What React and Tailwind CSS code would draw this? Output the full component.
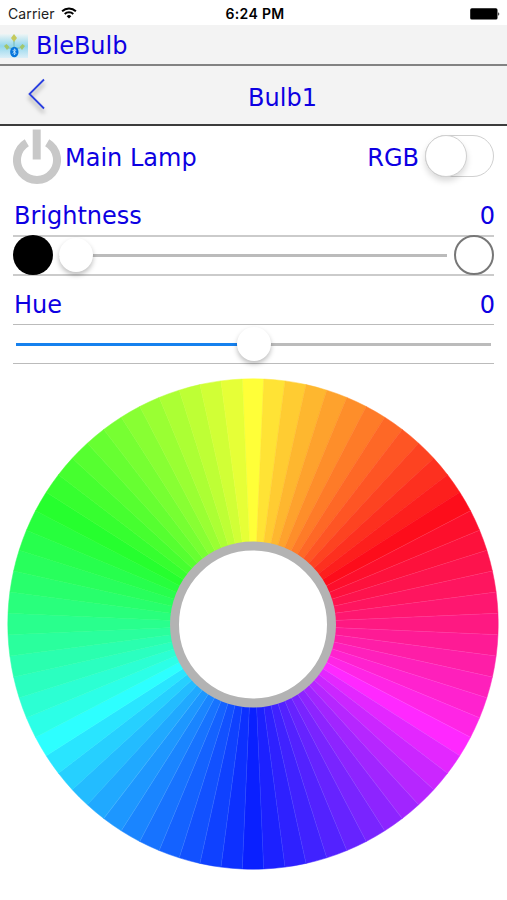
import React from 'react'

const stops = [
  [255, 255, 56],
  [253, 13, 27],
  [255, 40, 255],
  [10, 32, 255],
  [45, 255, 255],
  [38, 255, 46],
]

const wedges = Array.from({ length: 72 }, (_, i) => {
  const part = Math.floor(i / 12)
  const from = stops[part]
  const to = stops[(part + 1) % 6]
  const step = (i % 12) / 12
  // red, green and blue take up a little more of the wheel than the mixes
  const t = part % 2 === 0 ? step ** 0.87 : 1 - (1 - step) ** 0.87
  const rgb = from.map((c, n) => Math.round(c + (to[n] - c) * t))
  return { angle: i * 5, fill: `rgb(${rgb.join(',')})` }
})

// thin highlights are only visible on the darker half of the wheel
const seams = wedges.filter((w) => w.angle >= 60 && w.angle <= 215)

const point = (deg, r) => {
  const a = (deg * Math.PI) / 180
  return `${(246 + r * Math.sin(a)).toFixed(2)} ${(246 - r * Math.cos(a)).toFixed(2)}`
}

const StatusBar = () => (
  <div className="flex h-[25px] items-center justify-between bg-white pl-[8px] pr-[7px] pt-[2px] font-['Inter',sans-serif] text-black">
    <div className="flex flex-1 items-center gap-[6px]">
      <span className="text-[14px] tracking-[0.1px] text-[#222]">Carrier</span>
      <svg className="-mt-[2px]" width="16" height="12" viewBox="0 0 16 12" fill="none" stroke="#000" strokeWidth="1.9">
        <path d="M1.1 4.3a9.9 9.9 0 0 1 13.8 0" />
        <path d="M3.7 7a6.2 6.2 0 0 1 8.6 0" />
        <path d="M8 11.6 5.7 9.2a3.3 3.3 0 0 1 4.6 0z" fill="#000" stroke="none" />
      </svg>
    </div>
    <span className="pl-[2px] text-[14px] font-semibold tracking-[0.35px]">6:24 PM</span>
    <div className="flex flex-1 justify-end">
      <svg width="30" height="12" viewBox="0 0 30 12">
        <rect x="0.2" y="0.3" width="27.3" height="11.2" rx="1.6" />
        <path d="M28.3 4.2a2.2 2.2 0 0 1 0 3.6z" />
      </svg>
    </div>
  </div>
)

const AppLogo = () => (
  <svg className="mt-[2px]" width="28" height="28" viewBox="0 0 28 28">
    <defs>
      <linearGradient id="sky" x1="0" y1="0" x2="0" y2="1">
        <stop offset="0" stopColor="#eef5f5" />
        <stop offset="0.5" stopColor="#92d6ec" />
        <stop offset="1" stopColor="#dceff8" />
      </linearGradient>
    </defs>
    <rect y="2" width="28" height="24" fill="url(#sky)" />
    <path d="M14 9v6M8 16h12" stroke="#8ccbd0" strokeWidth="2" />
    <path d="M14 2 17 6 14 10 11 6z" fill="#c5c95c" />
    <path d="m4 14 2.500-2 3 3-2.500 3z" fill="#a2c66c" />
    <path d="m25 14-2.500-2-3 3 2.500 3z" fill="#a2c66c" />
    <ellipse cx="14.300" cy="20" rx="4.200" ry="5.300" fill="#0876dc" />
    <path d="m12.700 18 3.200 3.300-1.600 1.600v-6l1.600 1.500-3.200 3.200" stroke="#d4efff" strokeWidth="0.800" fill="none" />
  </svg>
)

const PowerIcon = () => (
  <svg className="-mt-[2px]" width="48" height="56" viewBox="0 0 48 56" fill="none" stroke="#c8c8c8" strokeWidth="8">
    <path d="M13.800 13.800a20 20 0 1 0 20.400 0" />
    <path d="M23.700 0.500v30" />
  </svg>
)

const ColorWheel = () => (
  <svg width="492" height="492" viewBox="0 0 492 492">
    {wedges.map((w) => (
      <path
        key={w.angle}
        d={`M246 246L${point(w.angle - 2.5, 245.2)}A245.2 245.2 0 0 1 ${point(w.angle + 2.5, 245.2)}Z`}
        fill={w.fill}
        stroke={w.fill}
        strokeWidth="0.5"
      />
    ))}
    {seams.map((w) => (
      <path
        key={w.angle}
        d={`M246 246L${point(w.angle + 2.5, 244.5)}`}
        stroke="#fff"
        strokeOpacity="0.09"
      />
    ))}
    <circle cx="246" cy="246.500" r="78.500" fill="#fff" stroke="#b3b3b3" strokeWidth="9" />
  </svg>
)

const Knob = () => (
  <div className="absolute -top-[16px] h-[34px] w-[34px] rounded-full bg-white shadow-[0_3px_5px_rgba(0,0,0,0.25)]" />
)

const App = () => {
  return (
    <div className="h-[900px] w-[507px] overflow-hidden bg-white font-['DejaVu_Sans',sans-serif] text-[24px] leading-7 text-[#0d00e2]">
      <StatusBar />

      <header className="flex h-[41px] items-center gap-2 border-b-2 border-[#828282] bg-[#f3f3f3]">
        <AppLogo />
        <span className="pt-[2px]">BleBulb</span>
      </header>

      <nav className="flex h-[60px] items-center border-b-2 border-[#3c3c3c] bg-[#f3f3f3] pl-[26px]">
        <svg className="-mt-[2px] drop-shadow-[0_4px_2px_rgba(0,0,0,0.35)]" width="22" height="34" viewBox="0 0 22 34" fill="none" stroke="#2a3fe0" strokeWidth="1.800">
          <path d="M18 2.500 3.500 17 18 31.500" />
        </svg>
        <span className="flex-1 pl-[10px] pt-[5px] text-center">Bulb1</span>
      </nav>

      <main className="px-[13px]">
        <div className="flex h-[63px] items-center">
          <PowerIcon />
          <span className="ml-1">Main Lamp</span>
          <span className="ml-auto">RGB</span>
          <div className="-mt-[3px] ml-[6px] h-[42px] w-[69px] rounded-full border border-[#d0d0d0]">
            <div className="-ml-px -mt-px h-[42px] w-[42px] rounded-full border border-[#d0d0d0] bg-white shadow-[0_4px_6px_rgba(0,0,0,0.15)]" />
          </div>
        </div>

        <div className="-mr-px flex h-[46px] items-end justify-between pb-[5px] pl-px">
          <span>Brightness</span>
          <span>0</span>
        </div>
        <div className="flex h-[41px] items-center border-y-2 border-[#cbcbcb]">
          <div className="-mt-px h-10 w-10 shrink-0 rounded-full bg-black" />
          <div className="relative ml-[6px] mr-[7px] h-[3px] flex-1 bg-[#bbb]">
            <Knob />
          </div>
          <div className="-mt-px h-10 w-10 shrink-0 rounded-full border-2 border-[#777] bg-white" />
        </div>

        <div className="-mr-px flex h-[48px] items-end justify-between pb-[5px] pl-px">
          <span>Hue</span>
          <span>0</span>
        </div>
        <div className="flex h-[40px] items-center border-y border-[#bbb] px-[3px]">
          <div className="h-[3px] w-[221px] bg-[#1681ee]" />
          <div className="relative h-[3px] flex-1 bg-[#bbb]">
            <Knob />
          </div>
        </div>

        <div className="-mx-[6px] mt-[14px]">
          <ColorWheel />
        </div>
      </main>
    </div>
  )
}

export default App
